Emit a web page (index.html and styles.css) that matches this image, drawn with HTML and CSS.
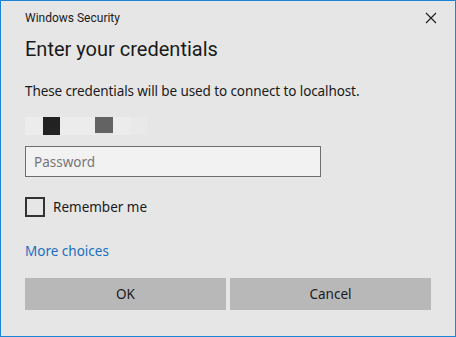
FILE: index.html
```html
<!DOCTYPE html>
<html>
<head>
    <meta charset="utf-8">
    <link rel="stylesheet" href="styles.css">
</head>
<body>
    <div class="dialog">
        <div class="titlebar">
            <span class="app-name">Windows Security</span>
            <svg class="close" width="12" height="12" viewBox="0 0 12 12">
                <path d="M1 1 L11 11 M11 1 L1 11" stroke="#1a1a1a" stroke-width="1.1" fill="none"/>
            </svg>
        </div>

        <h1>Enter your credentials</h1>
        <p class="info">These credentials will be used to connect to localhost.</p>

        <div class="user-tile">
            <span class="px light"></span>
            <span class="px dark"></span>
            <span class="px light"></span>
            <span class="px light"></span>
            <span class="px gray"></span>
            <span class="px light"></span>
            <span class="px faint"></span>
        </div>

        <input class="password" type="password" placeholder="Password">

        <label class="remember">
            <span class="checkbox"></span>
            Remember me
        </label>

        <a class="more" href="#">More choices</a>

        <div class="buttons">
            <button class="btn">OK</button>
            <button class="btn">Cancel</button>
        </div>
    </div>
</body>
</html>
```

FILE: styles.css
```css
body {
    margin: 0;
    font-family: "Noto Sans", "Open Sans", sans-serif;
    color: #1a1a1a;
}

.dialog {
    width: 456px;
    height: 337px;
    box-sizing: border-box;
    border: 1px solid #1a85d6;
    background: #e6e6e6;
    padding: 0 24px;
}

.titlebar {
    display: flex;
    justify-content: space-between;
    align-items: center;
    height: 33px;
    margin-right: -6px;
}

.app-name {
    font-family: Roboto, "Noto Sans", sans-serif;
    font-size: 12px;
}

.close {
    margin-top: 1px;
}

h1 {
    margin: 1px 0 0 0;
    font-family: Roboto, "Noto Sans", sans-serif;
    font-size: 20px;
    font-weight: 400;
    line-height: 28px;
}

.info {
    margin: 19px 0 0 0;
    font-size: 13.5px;
    letter-spacing: -0.1px;
    line-height: 18px;
}

.user-tile {
    display: flex;
    margin-top: 17px;
    height: 18px;
}

.px {
    width: 17.5px;
    height: 18px;
}

.light { background: #ececec; }
.faint { background: #e9e9e9; }
.dark { background: #222222; }
.gray { background: #636363; height: 16px; }

.password {
    display: block;
    box-sizing: border-box;
    width: 296px;
    height: 31px;
    margin-top: 11px;
    padding: 0 8px;
    border: 1px solid #6e6e6e;
    background: #f2f2f2;
    font-family: inherit;
    font-size: 13.5px;
    color: #1a1a1a;
    outline: none;
}

.password::placeholder {
    color: #767676;
}

.remember {
    display: flex;
    align-items: center;
    gap: 8px;
    margin-top: 20px;
    font-size: 13.5px;
}

.checkbox {
    width: 20px;
    height: 20px;
    box-sizing: border-box;
    border: 2px solid #333333;
}

.more {
    display: block;
    margin-top: 25px;
    font-size: 13.5px;
    color: #1c6fbf;
    text-decoration: none;
}

.buttons {
    display: grid;
    grid-template-columns: 1fr 1fr;
    gap: 4px;
    margin-top: 18px;
}

.btn {
    height: 32px;
    border: none;
    background: #b8b8b8;
    font-family: inherit;
    font-size: 13.5px;
    color: #1a1a1a;
}
```
